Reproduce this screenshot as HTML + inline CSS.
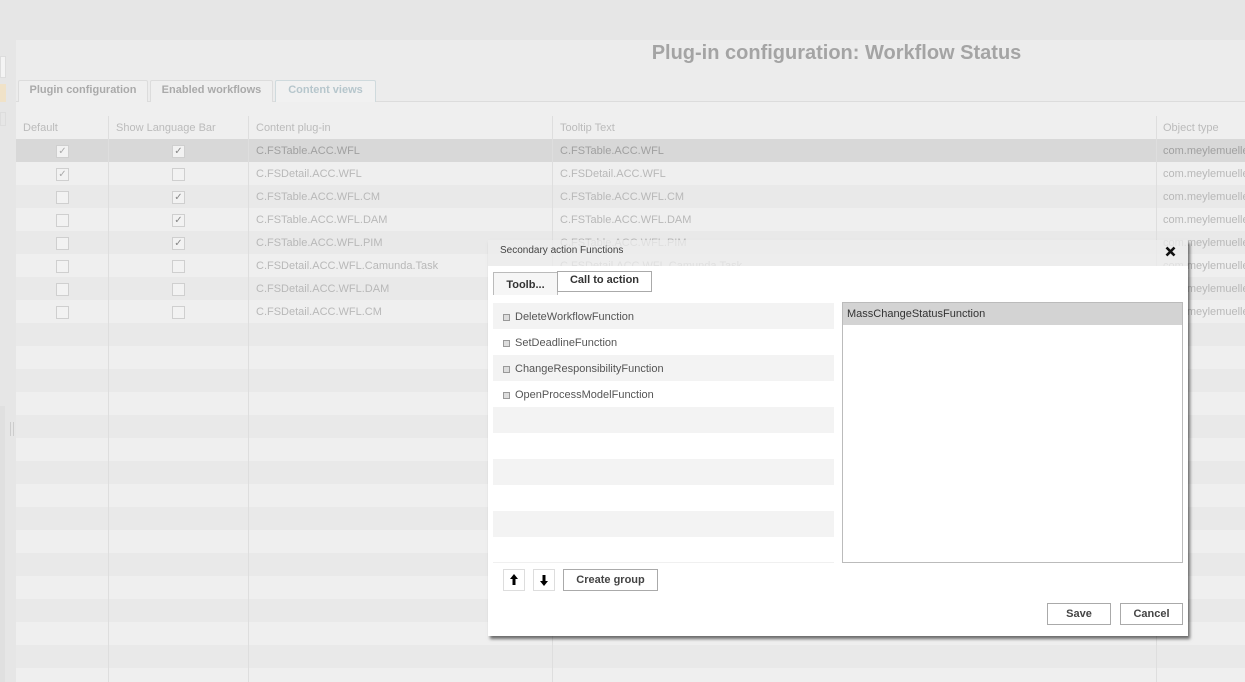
<!DOCTYPE html>
<html><head><meta charset="utf-8"><style>
*{box-sizing:border-box;margin:0;padding:0}
html,body{width:1245px;height:682px;overflow:hidden}
body{background:#e6e6e6;font-family:"Liberation Sans",Arial,sans-serif;position:relative}
.abs{position:absolute}
.panel{left:16px;top:40px;width:1229px;height:642px;background:#ececec}
.title{left:0;top:42px;width:1245px;text-align:center;padding-left:428px;font-size:20px;font-weight:bold;color:#a4a4a4}
.tab{top:80px;height:22px;border:1px solid #dcdcdc;border-bottom:none;background:#efefef;font-size:11px;font-weight:bold;color:#aaa;text-align:center;line-height:18px;border-radius:2px 2px 0 0}
.row{left:16px;width:1229px;height:23px;font-size:11px;color:#b8b8b8}
.row span{position:absolute;top:6px}
.cb{position:absolute;width:13px;height:13px;border:1px solid #cfcfcf;background:#f2f2f2;top:6px;font-size:10px;line-height:11px;text-align:center;color:#aaa}
.vl{top:116px;width:1px;height:566px;background:#dedede}
.dlg{left:488px;top:240px;width:700px;height:396px;box-shadow:2px 3px 3px rgba(0,0,0,.55)}
.li{position:absolute;left:493px;width:341px;height:26px;font-size:11px;color:#555}
.li i{position:absolute;left:10px;top:11px;width:7px;height:7px;border:1px solid #999;background:#ddd}
.li span{position:absolute;left:22px;top:8px}
.btn{position:absolute;border:1px solid #aaa;background:#fff;font-size:11px;font-weight:bold;color:#444;text-align:center}
</style></head><body>
<div class="abs panel"></div>
<div class="abs" style="left:0;top:56px;width:6px;height:22px;border:1px solid #ddd;background:#f4f4f4"></div>
<div class="abs" style="left:0;top:84px;width:6px;height:18px;background:#f0e2c8"></div>
<div class="abs" style="left:0;top:112px;width:6px;height:14px;border:1px solid #ddd"></div>
<div class="abs" style="left:0;top:406px;width:5px;height:276px;background:#e0e0e0"></div>
<div class="abs title">Plug-in configuration: Workflow Status</div>
<div class="abs" style="left:16px;top:101px;width:1229px;height:1px;background:#dcdcdc"></div>
<div class="abs tab" style="left:18px;width:130px">Plugin configuration</div>
<div class="abs tab" style="left:150px;width:123px">Enabled workflows</div>
<div class="abs tab" style="left:275px;width:101px;color:#b6c6cc;border-color:#cfdadd;height:23px;background:#f1f1f1">Content views</div>
<div class="abs" style="left:16px;top:102px;width:1229px;height:14px;background:#efefef"></div>
<div class="abs row" style="top:116px;background:#efefef;color:#bbb"><span style="left:7px">Default</span><span style="left:100px">Show Language Bar</span><span style="left:240px">Content plug-in</span><span style="left:544px">Tooltip Text</span><span style="left:1147px">Object type</span></div>

<div class="abs row" style="top:139px;background:#d8d8d8;color:#a0a0a0"><div class="cb" style="left:40px">✓</div><div class="cb" style="left:156px;color:#888">✓</div><span style="left:240px">C.FSTable.ACC.WFL</span><span style="left:544px">C.FSTable.ACC.WFL</span><span style="left:1147px">com.meylemuelle</span></div>
<div class="abs row" style="top:162px;background:#efefef"><div class="cb" style="left:40px">✓</div><div class="cb" style="left:156px"></div><span style="left:240px">C.FSDetail.ACC.WFL</span><span style="left:544px">C.FSDetail.ACC.WFL</span><span style="left:1147px">com.meylemuelle</span></div>
<div class="abs row" style="top:185px;background:#e9e9e9"><div class="cb" style="left:40px"></div><div class="cb" style="left:156px;color:#888">✓</div><span style="left:240px">C.FSTable.ACC.WFL.CM</span><span style="left:544px">C.FSTable.ACC.WFL.CM</span><span style="left:1147px">com.meylemuelle</span></div>
<div class="abs row" style="top:208px;background:#efefef"><div class="cb" style="left:40px"></div><div class="cb" style="left:156px;color:#888">✓</div><span style="left:240px">C.FSTable.ACC.WFL.DAM</span><span style="left:544px">C.FSTable.ACC.WFL.DAM</span><span style="left:1147px">com.meylemuelle</span></div>
<div class="abs row" style="top:231px;background:#e9e9e9"><div class="cb" style="left:40px"></div><div class="cb" style="left:156px;color:#888">✓</div><span style="left:240px">C.FSTable.ACC.WFL.PIM</span><span style="left:544px">C.FSTable.ACC.WFL.PIM</span><span style="left:1147px">com.meylemuelle</span></div>
<div class="abs row" style="top:254px;background:#efefef"><div class="cb" style="left:40px"></div><div class="cb" style="left:156px"></div><span style="left:240px">C.FSDetail.ACC.WFL.Camunda.Task</span><span style="left:544px">C.FSDetail.ACC.WFL.Camunda.Task</span><span style="left:1147px">com.meylemuelle</span></div>
<div class="abs row" style="top:277px;background:#e9e9e9"><div class="cb" style="left:40px"></div><div class="cb" style="left:156px"></div><span style="left:240px">C.FSDetail.ACC.WFL.DAM</span><span style="left:1147px">com.meylemuelle</span></div>
<div class="abs row" style="top:300px;background:#efefef"><div class="cb" style="left:40px"></div><div class="cb" style="left:156px"></div><span style="left:240px">C.FSDetail.ACC.WFL.CM</span><span style="left:1147px">com.meylemuelle</span></div>
<div class="abs row" style="top:323px;background:#e9e9e9"></div><div class="abs row" style="top:346px;background:#efefef"></div>
<div class="abs row" style="top:369px;background:#e9e9e9"></div><div class="abs row" style="top:392px;background:#efefef"></div>
<div class="abs row" style="top:415px;background:#e9e9e9"></div><div class="abs row" style="top:438px;background:#efefef"></div>
<div class="abs row" style="top:461px;background:#e9e9e9"></div><div class="abs row" style="top:484px;background:#efefef"></div>
<div class="abs row" style="top:507px;background:#e9e9e9"></div><div class="abs row" style="top:530px;background:#efefef"></div>
<div class="abs row" style="top:553px;background:#e9e9e9"></div><div class="abs row" style="top:576px;background:#efefef"></div>
<div class="abs row" style="top:599px;background:#e9e9e9"></div><div class="abs row" style="top:622px;background:#efefef"></div>
<div class="abs row" style="top:645px;background:#e9e9e9"></div><div class="abs row" style="top:668px;background:#efefef;height:14px"></div>
<div class="abs vl" style="left:108px"></div><div class="abs vl" style="left:248px"></div><div class="abs vl" style="left:552px"></div><div class="abs vl" style="left:1156px"></div>
<div class="abs" style="left:10px;top:422px;width:4px;height:14px;border-left:1px solid #ccc;border-right:1px solid #ccc"></div>

<div class="abs dlg">
<div class="abs" style="left:0;top:0;width:700px;height:26px;background:rgba(236,236,236,.75)"></div>
<div class="abs" style="left:12px;top:5px;font-size:10px;color:#444">Secondary action Functions</div>
<svg class="abs" style="left:677px;top:6px" width="11" height="11" viewBox="0 0 11 11"><path d="M1.5 1.5L9.5 9.5M9.5 1.5L1.5 9.5" stroke="#111" stroke-width="2.6"/></svg>
<div class="abs" style="left:0;top:26px;width:700px;height:370px;background:#fff"></div>
<div class="abs" style="left:5px;top:32px;width:65px;height:23px;border:1px solid #bbb;border-bottom:none;background:#f6f6f6;font-size:11px;font-weight:bold;color:#333;text-align:center;line-height:24px">Toolb...</div>
<div class="abs" style="left:69px;top:31px;width:95px;height:21px;border:1px solid #aaa;background:#fff;font-size:11px;font-weight:bold;color:#333;text-align:center;line-height:17px">Call to action</div>
</div>
<div class="abs" style="left:493px;top:302px;width:341px;height:261px;border-bottom:1px solid #f0f0f0"></div>
<div class="li" style="top:303px;background:#f3f3f3"><i></i><span>DeleteWorkflowFunction</span></div>
<div class="li" style="top:329px"><i></i><span>SetDeadlineFunction</span></div>
<div class="li" style="top:355px;background:#f3f3f3"><i></i><span>ChangeResponsibilityFunction</span></div>
<div class="li" style="top:381px"><i></i><span>OpenProcessModelFunction</span></div>
<div class="li" style="top:407px;background:#f3f3f3"></div>
<div class="li" style="top:459px;background:#f3f3f3"></div>
<div class="li" style="top:511px;background:#f3f3f3"></div>
<div class="abs" style="left:842px;top:302px;width:341px;height:261px;border:1px solid #bbb;background:#fff"></div>
<div class="abs" style="left:843px;top:303px;width:339px;height:22px;background:#d3d3d3;font-size:11px;color:#333;padding:5px 4px">MassChangeStatusFunction</div>
<div class="btn" style="left:503px;top:569px;width:22px;height:22px;border-color:#ddd"><svg width="20" height="20" viewBox="0 0 20 20"><path d="M10 4L6 9H8.5V15H11.5V9H14Z" fill="#000"/></svg></div>
<div class="btn" style="left:533px;top:569px;width:22px;height:22px;border-color:#ddd"><svg width="20" height="20" viewBox="0 0 20 20"><path d="M10 16L6 11H8.5V5H11.5V11H14Z" fill="#000"/></svg></div>
<div class="btn" style="left:563px;top:569px;width:95px;height:22px;line-height:20px">Create group</div>
<div class="btn" style="left:1047px;top:603px;width:64px;height:22px;line-height:20px">Save</div>
<div class="btn" style="left:1120px;top:603px;width:63px;height:22px;line-height:20px">Cancel</div>
</body></html>
